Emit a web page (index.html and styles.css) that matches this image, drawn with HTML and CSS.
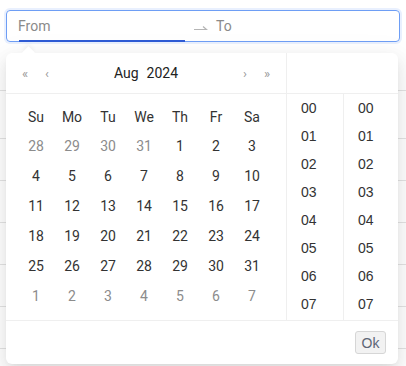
FILE: index.html
```html
<!DOCTYPE html>
<html lang="en">
<head>
    <meta charset="UTF-8">
    <meta name="viewport" content="width=device-width, initial-scale=1.0">
    <title>Date time range</title>
    <link rel="stylesheet" href="styles.css">
</head>
<body>
    <div class="picker">
        <div class="range-input">
            <div class="range-field">From</div>
            <div class="range-sep">
                <svg width="16" height="10" viewBox="0 0 16 10"><path d="M2 7.5h12.5L11 4.5" fill="none" stroke="#b5b5b5" stroke-width="1.2"/></svg>
            </div>
            <div class="range-field">To</div>
            <div class="active-bar"></div>
        </div>

        <div class="dropdown">
            <div class="dropdown-arrow"></div>
            <div class="panels">
                <div class="date-panel">
                    <div class="panel-header">
                        <span class="nav">«</span>
                        <span class="nav">‹</span>
                        <div class="header-view"><span>Aug</span><span>2024</span></div>
                        <span class="nav">›</span>
                        <span class="nav">»</span>
                    </div>
                    <div class="panel-body">
                        <div class="days">
                            <span class="wk">Su</span><span class="wk">Mo</span><span class="wk">Tu</span><span class="wk">We</span><span class="wk">Th</span><span class="wk">Fr</span><span class="wk">Sa</span>
                            <span class="out">28</span><span class="out">29</span><span class="out">30</span><span class="out">31</span><span>1</span><span>2</span><span>3</span>
                            <span>4</span><span>5</span><span>6</span><span>7</span><span>8</span><span>9</span><span>10</span>
                            <span>11</span><span>12</span><span>13</span><span>14</span><span>15</span><span>16</span><span>17</span>
                            <span>18</span><span>19</span><span>20</span><span>21</span><span>22</span><span>23</span><span>24</span>
                            <span>25</span><span>26</span><span>27</span><span>28</span><span>29</span><span>30</span><span>31</span>
                            <span class="out">1</span><span class="out">2</span><span class="out">3</span><span class="out">4</span><span class="out">5</span><span class="out">6</span><span class="out">7</span>
                        </div>
                    </div>
                </div>
                <div class="time-panel">
                    <div class="panel-header"></div>
                    <div class="time-body">
                        <ul class="time-col">
                            <li>00</li><li>01</li><li>02</li><li>03</li><li>04</li><li>05</li><li>06</li><li>07</li>
                        </ul>
                        <ul class="time-col">
                            <li>00</li><li>01</li><li>02</li><li>03</li><li>04</li><li>05</li><li>06</li><li>07</li>
                        </ul>
                    </div>
                </div>
            </div>
            <div class="footer">
                <button class="ok-btn">Ok</button>
            </div>
        </div>
    </div>

    <div class="bg-table">
        <div class="bg-row first"></div>
        <div class="bg-row head"></div>
        <div class="bg-row"></div>
        <div class="bg-row"></div>
        <div class="bg-row"></div>
        <div class="bg-row"></div>
        <div class="bg-row"></div>
    </div>
</body>
</html>
```

FILE: styles.css
```css
html, body { height: 366px; }
body { margin: 0; background: #fff; font-family: Roboto, "Liberation Sans", sans-serif; font-size: 14px; color: #333; overflow: hidden; }
.picker { position: relative; padding: 10px 6px; }

.range-input { position: relative; display: flex; align-items: center; height: 30px; padding: 0 11px; border: 1px solid #6e9ef5; border-radius: 4px; box-shadow: 0 0 0 2px rgba(70, 130, 245, 0.12); }
.range-field { width: 166px; color: #8a8a8a; line-height: 30px; }
.range-sep { display: flex; align-items: center; padding: 0 8px; height: 30px; }
.range-sep svg { display: block; margin-top: 2px; }
.active-bar { position: absolute; left: 12px; bottom: -1px; width: 166px; height: 2px; background: #2f5cd6; }

.dropdown { position: absolute; top: 53px; left: 6px; width: 392px; background: #fff; border-radius: 6px; z-index: 2;
    box-shadow: 0 6px 16px 0 rgba(0,0,0,.08), 0 3px 6px -4px rgba(0,0,0,.12), 0 9px 28px 8px rgba(0,0,0,.05); }
.dropdown-arrow { position: absolute; top: -5px; left: 18px; width: 9px; height: 9px; background: #fff; transform: rotate(45deg); box-shadow: -2px -2px 4px rgba(0,0,0,.04); }

.panels { display: flex; border-bottom: 1px solid #efefef; }
.date-panel { width: 280px; flex-shrink: 0; border-right: 1px solid #efefef; }
.panel-header { display: flex; align-items: center; height: 40px; padding: 0 8px; border-bottom: 1px solid #efefef; }
.nav { width: 22px; text-align: center; color: #999; font-size: 13px; }
.header-view { flex: 1; display: flex; justify-content: center; gap: 8px; color: #222; }

.panel-body { padding: 7px 12px; }
.days { display: grid; grid-template-columns: repeat(7, 36px); grid-auto-rows: 30px; }
.days span { display: flex; align-items: center; justify-content: center; color: #333; }
.days .wk { height: 32px; }
.days .out { color: #8c8c8c; }

.time-panel { flex: 1; min-width: 0; }
.time-panel .panel-header { padding: 0; }
.time-body { display: flex; height: 226px; overflow: hidden; }
.time-col { list-style: none; margin: 0; padding: 0; width: 56px; font-family: "Liberation Sans", Arial, sans-serif; }
.time-col + .time-col { width: 54px; border-left: 1px solid #efefef; }
.time-col li { height: 28px; line-height: 28px; padding-left: 14px; color: #333; }

.footer { display: flex; justify-content: flex-end; padding: 10px 12px; }
.ok-btn { height: 23px; width: 31px; padding: 0; border: 1px solid #d6d6d6; border-radius: 3px; background: #f2f2f2; color: #5d6676; font-family: "Liberation Sans", Arial, sans-serif; font-size: 14px; }

.bg-row { height: 41px; border-bottom: 1px solid #e4e4e4; }
.bg-row.first { height: 38px; }
.bg-row.head { height: 47px; }
```
